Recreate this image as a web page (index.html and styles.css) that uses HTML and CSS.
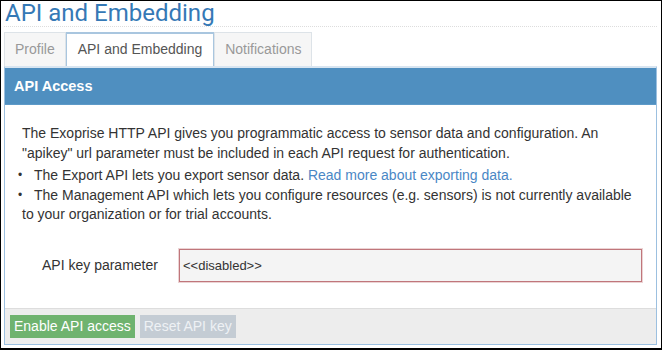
FILE: index.html
```html
<!DOCTYPE html>
<html lang="en">
<head>
    <meta charset="UTF-8">
    <meta name="viewport" content="width=device-width, initial-scale=1.0">
    <title>API and Embedding</title>
    <link rel="stylesheet" href="styles.css">
</head>
<body>
    <div class="frame">
        <h1 class="page-title">API and Embedding</h1>

        <ul class="tabs">
            <li class="tab">Profile</li>
            <li class="tab active">API and Embedding</li>
            <li class="tab">Notifications</li>
        </ul>

        <div class="panel">
            <div class="panel-heading">API Access</div>
            <div class="panel-body">
                <p>The Exoprise HTTP API gives you programmatic access to sensor data and configuration. An "apikey" url parameter must be included in each API request for authentication.</p>
                <ul class="notes">
                    <li>The Export API lets you export sensor data. <a href="#">Read more about exporting data.</a></li>
                    <li>The Management API which lets you configure resources (e.g. sensors) is not currently available to your organization or for trial accounts.</li>
                </ul>

                <div class="form-row">
                    <label for="apikey">API key parameter</label>
                    <input type="text" id="apikey" value="&lt;&lt;disabled&gt;&gt;" readonly>
                </div>
            </div>
            <div class="panel-footer">
                <button class="btn btn-success">Enable API access</button>
                <button class="btn btn-muted" disabled>Reset API key</button>
            </div>
        </div>
    </div>
</body>
</html>
```

FILE: styles.css
```css
body { margin: 0; font-family: "Liberation Sans", Arial, sans-serif; font-size: 14px; color: #333; background: #fff; }
.frame { box-sizing: border-box; width: 662px; height: 350px; border: 1px solid #000; border-bottom-width: 2px; padding: 0 4px 0 3px; }
.page-title { margin: 0; padding: 0 0 0 1px; font-family: Roboto, sans-serif; font-weight: 400; font-size: 24px; line-height: 25px; color: #3579b6; border-bottom: 1px dotted #ddd; }
.tabs { list-style: none; margin: 5px 0 0; padding: 0; display: flex; height: 34px; }
.tab { box-sizing: border-box; height: 34px; padding: 0 10px; line-height: 32px; color: #999; background: #f6f6f6; border: 1px solid #dde3e8; border-bottom: none; }
.tab.active { color: #555; background: #fff; border-color: #a9c6df; border-top: 2px solid #a9c6df; line-height: 31px; padding: 0 11px; }
.panel { box-sizing: border-box; height: 279px; border: 1px solid #9cc0e0; border-top: 2px solid #d8e5f1; display: flex; flex-direction: column; }
.panel-heading { height: 36px; line-height: 37px; padding: 0 9px; background: #4f8fc0; color: #fff; font-weight: bold; font-size: 14.5px; border-bottom: 1px solid #5e9ac8; }
.panel-body { flex: 1; padding: 18px 14px 0 17px; }
.panel-body p { margin: 0; line-height: 20px; }
.notes { list-style: none; margin: 3px 0 0; padding: 0; line-height: 19.5px; }
.notes li::before { content: "\2022"; display: inline-block; vertical-align: top; width: 16px; margin-left: -4px; font-size: 12px; }
.notes a { color: #4a87c5; text-decoration: none; }
.form-row { display: flex; align-items: center; margin-top: 24px; }
.form-row label { width: 157px; padding-left: 20px; box-sizing: border-box; }
.form-row input { flex: 1; height: 33px; box-sizing: border-box; border: 1px solid #c0767b; box-shadow: 0 0 0 1px #ecd3d4; background: #f4f4f4; font-family: inherit; font-size: 13px; color: #333; padding: 0 3px; outline: none; }
.panel-footer { height: 36px; box-sizing: border-box; background: #ededed; border-top: 1px solid #ddd; padding: 6px 5px 0; display: flex; gap: 5px; align-items: flex-start; }
.btn { font-family: inherit; font-size: 14px; border: none; padding: 0 4px; height: 23px; line-height: 23px; color: #fff; }
.btn-success { background: #6fb36f; }
.btn-muted { background: #c4ccd4; color: #eef1f4; }
```
